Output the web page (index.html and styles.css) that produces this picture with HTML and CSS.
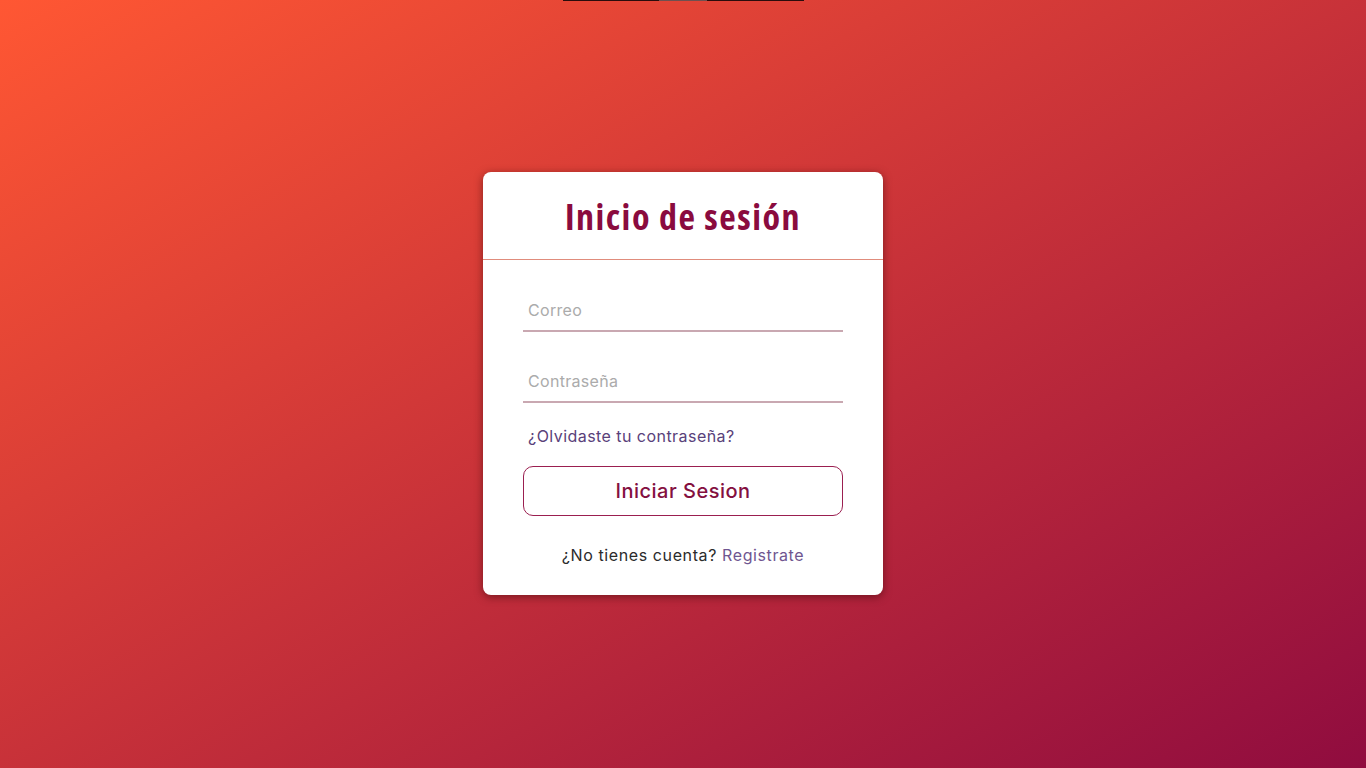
FILE: index.html
```html
<!DOCTYPE html>
<html lang="es">
<head>
<meta charset="utf-8">
<title>Inicio de sesión</title>
<link rel="stylesheet" href="styles.css">
</head>
<body>
<div class="topbar"><span class="seg dark1"></span><span class="seg grey"></span><span class="seg dark2"></span></div>
<main class="page">
  <section class="card">
    <header class="card-head">
      <h1 class="title">Inicio de sesión</h1>
    </header>
    <form class="form">
      <div class="field"><input class="input" type="email" placeholder="Correo"></div>
      <div class="field"><input class="input" type="password" placeholder="Contraseña"></div>
      <a class="forgot" href="#">¿Olvidaste tu contraseña?</a>
      <button class="btn" type="button">Iniciar Sesion</button>
      <p class="signup">¿No tienes cuenta? <a class="signup-link" href="#">Registrate</a></p>
    </form>
  </section>
</main>
</body>
</html>
```
FILE: styles.css
```css
* { box-sizing: border-box; }
html, body { margin: 0; height: 100%; }
body {
  background: linear-gradient(to bottom right, #ff5733, #900c3f);
  font-family: "Inter", "DejaVu Sans", sans-serif;
  position: relative;
  overflow: hidden;
}
.topbar {
  position: absolute;
  top: 0;
  left: 563px;
  display: flex;
  height: 1px;
}
.seg { display: block; height: 1px; }
.dark1 { width: 96px; background: #2a0c0c; }
.grey { width: 48px; background: #6e5050; }
.dark2 { width: 97px; background: #2a0c0c; }
.page {
  height: 100%;
  display: flex;
  align-items: center;
  justify-content: center;
  padding-bottom: 1px;
}
.card {
  width: 400px;
  background: #fff;
  border-radius: 8px;
  box-shadow: 0 2px 8px rgba(60, 10, 10, 0.55);
}
.card-head {
  height: 88px;
  border-bottom: 1px solid #e08c7c;
  display: flex;
  align-items: center;
  justify-content: center;
  padding-top: 2px;
}
.title {
  margin: 0;
  font-family: "Open Sans", sans-serif;
  font-stretch: 75%;
  font-weight: 700;
  font-size: 36px;
  color: #8a0b3e;
  letter-spacing: 1.5px;
}
.form {
  padding: 29px 40px 30px;
  display: flex;
  flex-direction: column;
}
.field { margin-bottom: 28px; }
.field + .field { margin-bottom: 23px; }
.input {
  width: 100%;
  height: 43px;
  border: none;
  border-bottom: 2px solid #c9a8b1;
  outline: none;
  padding: 0 5px;
  font-family: "Inter", sans-serif;
  font-size: 16px;
  letter-spacing: 0.3px;
  color: #333;
  background: transparent;
}
.input::placeholder { color: #ababab; }
.forgot {
  padding-left: 5px;
  font-size: 16px;
  letter-spacing: 0.45px;
  color: #59417a;
  text-decoration: none;
  line-height: 20px;
}
.btn {
  margin-top: 20px;
  height: 50px;
  border: 1px solid #9b1f50;
  border-radius: 10px;
  background: #fff;
  color: #84103f;
  font-family: "Inter", sans-serif;
  font-size: 20px;
  letter-spacing: 0.5px;
  font-weight: 500;
}
.signup {
  margin: 29px 0 0;
  text-align: center;
  font-size: 16px;
  letter-spacing: 0.6px;
  color: #2b2b2b;
  line-height: 20px;
}
.signup-link { color: #6f5690; text-decoration: none; }
```
